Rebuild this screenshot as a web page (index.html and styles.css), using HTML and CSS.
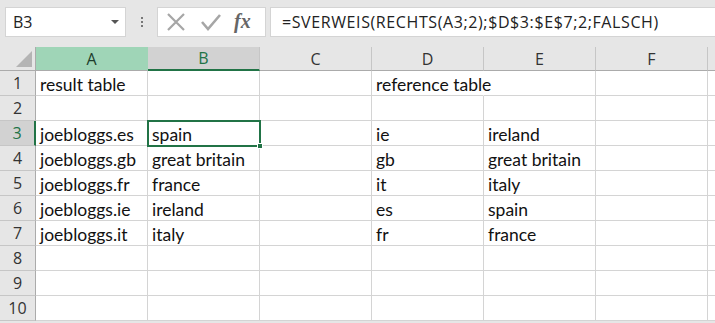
FILE: index.html
```html
<!DOCTYPE html>
<html>
<head>
<meta charset="utf-8">
<link rel="stylesheet" href="styles.css">
</head>
<body>
<div class="app">
  <div class="toolbar">
    <div class="namebox">
      <span class="name">B3</span>
      <svg class="dd" width="8" height="5" viewBox="0 0 8 5"><path d="M0 0H8L4 4Z" fill="#555"/></svg>
    </div>
    <div class="grip"><span></span><span></span><span></span></div>
    <div class="fxbox">
      <svg class="ico" width="20" height="20" viewBox="0 0 20 20"><path d="M2 2L18 18M18 2L2 18" stroke="#a6a6a6" stroke-width="2.2" fill="none"/></svg>
      <svg class="ico" width="22" height="20" viewBox="0 0 22 20"><path d="M2 10L8 17L20 3" stroke="#a6a6a6" stroke-width="2.6" fill="none"/></svg>
      <span class="fx">fx</span>
    </div>
    <div class="formula">=SVERWEIS(RECHTS(A3;2);$D$3:$E$7;2;FALSCH)</div>
  </div>
  <div class="sheet">
    <div class="corner"><svg width="16" height="16" viewBox="0 0 16 16"><path d="M16 0V16H0Z" fill="#b4b4b4"/></svg></div>
    <div class="ch ch-sel-a">A</div>
    <div class="ch ch-sel">B</div>
    <div class="ch">C</div>
    <div class="ch">D</div>
    <div class="ch">E</div>
    <div class="ch">F</div>
    <div class="ch ch-end"></div>

    <div class="rh">1</div><div class="c">result table</div><div class="c"></div><div class="c"></div><div class="c c-spill">reference table</div><div class="c"></div><div class="c"></div><div class="c c-end"></div>
    <div class="rh">2</div><div class="c"></div><div class="c"></div><div class="c"></div><div class="c"></div><div class="c"></div><div class="c"></div><div class="c c-end"></div>
    <div class="rh rh-sel">3</div><div class="c">joebloggs.es</div><div class="c active">spain<span class="handle"></span></div><div class="c"></div><div class="c">ie</div><div class="c">ireland</div><div class="c"></div><div class="c c-end"></div>
    <div class="rh">4</div><div class="c">joebloggs.gb</div><div class="c">great britain</div><div class="c"></div><div class="c">gb</div><div class="c">great britain</div><div class="c"></div><div class="c c-end"></div>
    <div class="rh">5</div><div class="c">joebloggs.fr</div><div class="c">france</div><div class="c"></div><div class="c">it</div><div class="c">italy</div><div class="c"></div><div class="c c-end"></div>
    <div class="rh">6</div><div class="c">joebloggs.ie</div><div class="c">ireland</div><div class="c"></div><div class="c">es</div><div class="c">spain</div><div class="c"></div><div class="c c-end"></div>
    <div class="rh">7</div><div class="c">joebloggs.it</div><div class="c">italy</div><div class="c"></div><div class="c">fr</div><div class="c">france</div><div class="c"></div><div class="c c-end"></div>
    <div class="rh">8</div><div class="c"></div><div class="c"></div><div class="c"></div><div class="c"></div><div class="c"></div><div class="c"></div><div class="c c-end"></div>
    <div class="rh">9</div><div class="c"></div><div class="c"></div><div class="c"></div><div class="c"></div><div class="c"></div><div class="c"></div><div class="c c-end"></div>
    <div class="rh">10</div><div class="c"></div><div class="c"></div><div class="c"></div><div class="c"></div><div class="c"></div><div class="c"></div><div class="c c-end"></div>
  </div>
</div>
</body>
</html>
```
FILE: styles.css
```css
* { box-sizing: border-box; }
html, body { margin: 0; padding: 0; }
body {
  width: 715px;
  height: 323px;
  overflow: hidden;
  background: #e6e6e6;
  font-family: "Open Sans", "Liberation Sans", sans-serif;
}
.app { display: flex; flex-direction: column; }
.toolbar {
  height: 47px;
  display: flex;
  align-items: flex-start;
  padding-top: 7px;
  padding-left: 5px;
}
.namebox {
  width: 121px;
  height: 30px;
  background: #fff;
  border: 1px solid #d4d4d4;
  display: flex;
  align-items: center;
  justify-content: space-between;
  padding: 0 6px 0 7px;
}
.name { font-size: 16px; color: #222; }
.dd { margin-top: 1px; }
.grip {
  width: 31px;
  height: 30px;
  display: flex;
  flex-direction: column;
  align-items: center;
  justify-content: center;
  gap: 2px;
}
.grip span { width: 2px; height: 2px; background: #777; }
.fxbox {
  width: 109px;
  height: 30px;
  background: #fff;
  border: 1px solid #d4d4d4;
  display: flex;
  align-items: center;
  padding-left: 8px;
  gap: 14px;
}
.fx {
  font-family: "Liberation Serif", serif;
  font-style: italic;
  font-size: 20px;
  font-weight: bold;
  color: #666;
  margin-left: -2px;
  margin-top: -2px;
}
.formula {
  margin-left: 4px;
  flex: 1;
  height: 30px;
  background: #fff;
  border: 1px solid #d4d4d4;
  border-right: none;
  font-size: 16px;
  letter-spacing: 0.6px;
  color: #222;
  display: flex;
  align-items: center;
  padding-left: 11px;
  white-space: nowrap;
}
.sheet {
  display: grid;
  grid-template-columns: 36px repeat(6, 112px) 7px;
  grid-template-rows: 24px repeat(10, 25px);
  background: #fff;
}
.corner {
  background: #e6e6e6;
  border-right: 1px solid #ababab;
  border-bottom: 1px solid #ababab;
  display: flex;
  align-items: flex-end;
  justify-content: flex-end;
  padding: 0 3px 3px 0;
}
.ch {
  background: #e6e6e6;
  border-right: 1px solid #c6c6c6;
  border-bottom: 1px solid #ababab;
  font-size: 16px;
  color: #333;
  display: flex;
  align-items: center;
  justify-content: center;
}
.ch-sel-a { background: #9fd5b7; color: #1d3d2b; border-right-color: #9fd5b7; }
.ch-sel { background: #d2d2d2; color: #217346; border-bottom: 2px solid #217346; }
.ch-end { border-right: none; }
.rh {
  background: #e6e6e6;
  border-right: 1px solid #ababab;
  border-bottom: 1px solid #c6c6c6;
  font-size: 16px;
  color: #333;
  display: flex;
  align-items: center;
  justify-content: center;
}
.rh-sel { background: #d2d2d2; color: #217346; border-right: 2px solid #217346; }
.c {
  border-right: 1px solid #d4d4d4;
  border-bottom: 1px solid #d4d4d4;
  font-family: "Lato", "Open Sans", sans-serif;
  font-size: 17.5px;
  color: #111;
  padding-left: 4px;
  padding-top: 2px;
  display: flex;
  align-items: center;
  white-space: nowrap;
  overflow: visible;
}
.c-spill { border-right-color: transparent; }
.c-end { border-right: none; }
.active {
  position: relative;
  outline: 2px solid #217346;
  outline-offset: -1px;
}
.handle {
  position: absolute;
  right: -4px;
  bottom: -4px;
  width: 6px;
  height: 6px;
  background: #217346;
  border: 1px solid #fff;
}
```
